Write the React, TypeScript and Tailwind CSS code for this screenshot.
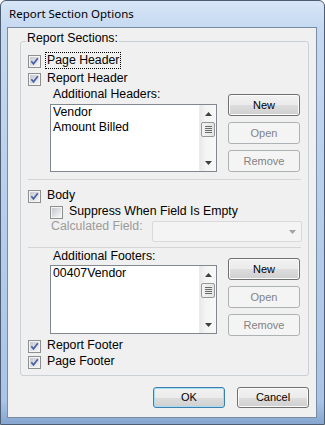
import React from "react";

function CheckBox({ checked }: { checked: boolean }) {
  return (
    <svg width="13" height="13" viewBox="0 0 13 13" className="shrink-0 mt-[3px]">
      <defs>
        <linearGradient id="cbgrad" x1="0" y1="0" x2="1" y2="1">
          <stop offset="0" stopColor="#c3c7ce" />
          <stop offset="1" stopColor="#f6f6f7" />
        </linearGradient>
      </defs>
      <rect x="0.5" y="0.5" width="12" height="12" fill="#f4f4f4" stroke="#8e8f8f" />
      <rect x="2" y="2" width="9" height="9" fill="url(#cbgrad)" />
      {checked && (
        <path d="M3.3 6.2 L5.5 8.8 L9.8 3.3" fill="none" stroke="#4b5fa6" strokeWidth="1.7" />
      )}
    </svg>
  );
}

function CheckRow({
  checked,
  label,
  focus,
  className,
}: {
  checked: boolean;
  label: string;
  focus?: boolean;
  className?: string;
}) {
  return (
    <div className={"flex items-start h-[16px] gap-[4px] " + (className ?? "")}>
      <CheckBox checked={checked} />
      <span
        className={
          "border px-[1px] leading-[15px] whitespace-nowrap " +
          (focus ? "border-dotted border-black" : "border-transparent")
        }
      >
        {label}
      </span>
    </div>
  );
}

function ScrollBar() {
  return (
    <div className="w-[17px] h-full flex flex-col bg-[linear-gradient(90deg,#e9e9e9,#f4f4f4_35%,#f8f8f8)] border-l border-[#ececec]">
      <div className="h-[17px] shrink-0 flex items-center justify-center">
        <svg width="7" height="4" viewBox="0 0 7 4">
          <path d="M0 4 L3.5 0 L7 4 Z" fill="#3f3f3f" />
        </svg>
      </div>
      <div className="mx-[1px] h-[15px] shrink-0 border border-[#979797] rounded-[2px] bg-[linear-gradient(90deg,#f3f3f3,#e4e4e4)] flex flex-col items-center justify-center gap-[1px]">
        <div className="w-[7px] h-px bg-[#6a6a6a]" />
        <div className="w-[7px] h-px bg-[#6a6a6a]" />
        <div className="w-[7px] h-px bg-[#6a6a6a]" />
        <div className="w-[7px] h-px bg-[#6a6a6a]" />
      </div>
      <div className="flex-1" />
      <div className="h-[17px] shrink-0 flex items-center justify-center">
        <svg width="7" height="4" viewBox="0 0 7 4">
          <path d="M0 0 L7 0 L3.5 4 Z" fill="#3f3f3f" />
        </svg>
      </div>
    </div>
  );
}

function ListBox({ items, className }: { items: string[]; className?: string }) {
  return (
    <div className={"flex border border-[#828790] bg-white " + (className ?? "")}>
      <div className="flex-1 flex flex-col pl-[2px]">
        {items.map((it) => (
          <div key={it} className="leading-[15px] whitespace-nowrap">
            {it}
          </div>
        ))}
      </div>
      <ScrollBar />
    </div>
  );
}

function Btn({
  label,
  disabled,
  def,
  className,
}: {
  label: string;
  disabled?: boolean;
  def?: boolean;
  className?: string;
}) {
  const look = disabled
    ? "border-[#adb2b5] bg-[#f4f4f4] text-[#838383]"
    : def
    ? "border-[#3c7fb1] bg-[linear-gradient(180deg,#f2f2f2_0%,#ebebeb_50%,#dddddd_51%,#cfcfcf_100%)] text-black shadow-[inset_0_0_0_1px_#a7dcf3]"
    : "border-[#707070] bg-[linear-gradient(180deg,#f2f2f2_0%,#ebebeb_50%,#dddddd_51%,#cfcfcf_100%)] text-black shadow-[inset_0_0_0_1px_#fbfbfb]";
  return (
    <div
      className={
        "flex items-center justify-center border rounded-[3px] text-[11px] leading-[13px] " +
        look +
        " " +
        (className ?? "")
      }
    >
      {label}
    </div>
  );
}

export default function App() {
  return (
    <div className="w-[325px] h-[425px] flex flex-col border border-[#4e5d71] rounded-t-[6px] overflow-hidden bg-[linear-gradient(180deg,#d8e6f7_0px,#c5d9f1_26px,#b7cfec_200px,#a9c4e7_400px,#86a6cf_100%)] font-['Liberation_Sans',Arial,sans-serif] text-[12.3px] text-black">
      <div className="h-[26px] shrink-0 flex items-center pl-[8px] font-['Noto_Sans',sans-serif] text-[11.5px]">
        Report Section Options
      </div>
      <div className="flex-1 ml-[6px] mr-[7px] mb-[6px] border border-[#7a8ca3] bg-[#f0f0f0] flex flex-col">
        <div className="relative mt-[13px] ml-[12px] mr-[7px] border border-[#cbd1d5] rounded-[3px] pt-[10px] pb-[6px] flex flex-col">
          <span className="absolute left-[5px] top-[-11px] px-[1px] bg-[#f0f0f0] leading-[15px]">
            Report Sections:
          </span>

          <CheckRow checked label="Page Header" focus className="ml-[7px]" />
          <CheckRow checked label="Report Header" className="ml-[7px] mt-[2px]" />

          <div className="flex items-start mt-[1px]">
            <div className="ml-[29px] w-[167px] flex flex-col">
              <div className="pl-[3px] leading-[15px]">Additional Headers:</div>
              <ListBox className="mt-[2px] h-[68px]" items={["Vendor", "Amount Billed"]} />
            </div>
            <div className="ml-[11px] w-[72px] mt-[7px] flex flex-col gap-[6px]">
              <Btn label="New" className="h-[22px]" />
              <Btn label="Open" disabled className="h-[22px]" />
              <Btn label="Remove" disabled className="h-[22px]" />
            </div>
          </div>

          <div className="mt-[7px] mx-[7px] h-px bg-[#d5d5d5]" />

          <CheckRow checked label="Body" className="ml-[7px] mt-[7px]" />
          <CheckRow checked={false} label="Suppress When Field Is Empty" className="ml-[29px]" />

          <div className="flex items-start">
            <div className="ml-[30px] leading-[15px] text-[#9c9c9c] whitespace-nowrap">
              Calculated Field:
            </div>
            <div className="ml-auto mr-[6px] mt-[2px] w-[150px] h-[21px] border border-[#d9d9d9] rounded-[2px] bg-[#f4f4f4] flex items-center justify-end pr-[5px]">
              <svg width="7" height="4" viewBox="0 0 7 4">
                <path d="M0 0 L7 0 L3.5 4 Z" fill="#a3a3a3" />
              </svg>
            </div>
          </div>

          <div className="mt-[5px] mx-[7px] h-px bg-[#d5d5d5]" />

          <div className="flex items-start mt-[1px]">
            <div className="ml-[29px] w-[167px] flex flex-col">
              <div className="pl-[3px] leading-[15px]">Additional Footers:</div>
              <ListBox className="mt-[1px] h-[69px]" items={["00407Vendor"]} />
            </div>
            <div className="ml-[11px] w-[72px] mt-[9px] flex flex-col gap-[6px]">
              <Btn label="New" className="h-[22px]" />
              <Btn label="Open" disabled className="h-[22px]" />
              <Btn label="Remove" disabled className="h-[22px]" />
            </div>
          </div>

          <CheckRow checked label="Report Footer" className="ml-[7px] mt-[1px]" />
          <CheckRow checked label="Page Footer" className="ml-[7px]" />
        </div>

        <div className="mt-[11px] mr-[7px] flex justify-end gap-[12px]">
          <Btn label="OK" def className="w-[72px] h-[21px]" />
          <Btn label="Cancel" className="w-[72px] h-[21px]" />
        </div>
      </div>
    </div>
  );
}
